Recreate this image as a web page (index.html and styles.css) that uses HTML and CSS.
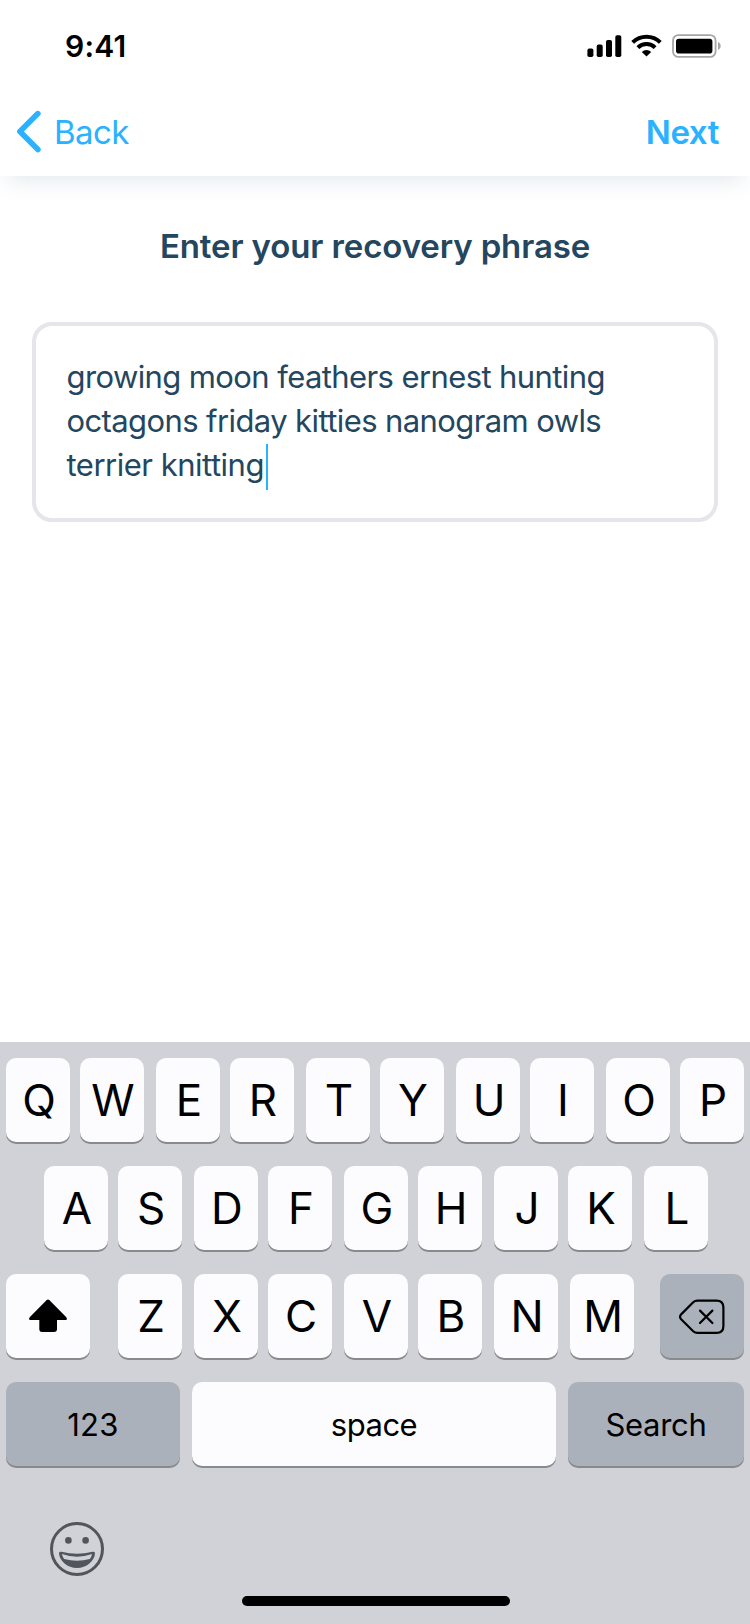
FILE: index.html
```html
<!DOCTYPE html>
<html lang="en">
<head>
<meta charset="utf-8">
<title>Recovery phrase</title>
<link rel="stylesheet" href="styles.css">
</head>
<body>
<div class="screen">
  <header class="header">
    <div class="status">
      <span class="time">9:41</span>
      <div class="status-icons">
        <svg class="signal" width="35" height="24" viewBox="0 0 35 24"><rect x=".4" y="14.6" width="6" height="8.4" rx="1.8"/><rect x="9.7" y="10.6" width="6" height="12.4" rx="1.8"/><rect x="19" y="6" width="6" height="17" rx="1.8"/><rect x="28.3" y="1.2" width="6" height="21.8" rx="1.8"/></svg>
        <svg class="wifi" width="31" height="24" viewBox="0 0 31 24"><g fill="none" stroke="#000" stroke-width="4"><path d="M1.7 8.4A19.6 19.6 0 0 1 29.3 8.4"/><path d="M6.9 13.6A12.3 12.3 0 0 1 24.1 13.6"/></g><path d="M15.5 22.6l-4.7-4.7a6.8 6.8 0 0 1 9.4 0z"/></svg>
        <svg class="battery" width="50" height="24" viewBox="0 0 50 24"><rect x="1" y="1.1" width="42.6" height="21.8" rx="5.4" fill="none" stroke="#a6a6a6" stroke-width="1.8"/><rect x="4" y="4.7" width="36.4" height="14.8" rx="2.8"/><path d="M46 8c1.8.8 2.7 2.2 2.7 4s-.9 3.200-2.700 4z" fill="#a6a6a6"/></svg>
      </div>
    </div>
    <nav class="nav">
      <a class="back"><svg width="26" height="44" viewBox="0 0 26 44"><path d="M21.900 3.600L3.900 21.500l18 18" fill="none" stroke="#2ab1ff" stroke-width="5.600" stroke-linecap="round" stroke-linejoin="round"/></svg><span>Back</span></a>
      <a class="next">Next</a>
    </nav>
  </header>
  <main class="content">
    <h1 class="title">Enter your recovery phrase</h1>
    <div class="phrase"><div class="line line-a">growing moon feathers ernest hunting</div><div class="line line-b">octagons friday kitties nanogram owls</div><div class="line line-c">terrier knitting<span class="caret"></span></div></div>
  </main>
  <section class="keyboard">
    <div class="row"><span class="key">Q</span><span class="key">W</span><span class="key">E</span><span class="key">R</span><span class="key">T</span><span class="key">Y</span><span class="key">U</span><span class="key">I</span><span class="key">O</span><span class="key">P</span></div>
    <div class="row row-mid"><span class="key">A</span><span class="key">S</span><span class="key">D</span><span class="key">F</span><span class="key">G</span><span class="key">H</span><span class="key">J</span><span class="key">K</span><span class="key">L</span></div>
    <div class="row row-low">
      <span class="key shift"><svg width="40" height="34" viewBox="0 0 40 34"><path d="M18.700 1.100Q20 0 21.300 1.100L38.300 18.200Q40 20.800 37.500 21H29V30Q29 33 26 33H14Q11.300 33 11.300 30V21H2.500Q0 20.800 1.700 18.200Z"/></svg></span>
      <div class="letters"><span class="key">Z</span><span class="key">X</span><span class="key">C</span><span class="key">V</span><span class="key">B</span><span class="key">N</span><span class="key">M</span></div>
      <span class="key delete"><svg width="46" height="36" viewBox="0 0 46 36"><g fill="none" stroke="#000" stroke-width="2.200" stroke-linecap="round" stroke-linejoin="round"><path d="M18.500 1.600H37.500Q44.400 1.600 44.400 8.500V27Q44.400 33.900 37.500 33.900H18.500Q16 33.900 14.200 32.200L1.900 20Q.2 17.800 1.900 15.600L14.200 3.300Q16 1.600 18.500 1.600Z"/><path d="M21 11.600L33.400 24M33.400 11.600L21 24"/></g></svg></span>
    </div>
    <div class="row row-fn"><span class="key fn numbers">123</span><span class="key fn space">space</span><span class="key fn search">Search</span></div>
    <svg class="emoji" width="54" height="54" viewBox="0 0 54 54"><circle cx="27" cy="27" r="25.500" fill="none" stroke="#50565b" stroke-width="3"/><g fill="#50565b"><circle cx="18.400" cy="18.400" r="3.300"/><circle cx="35.600" cy="18.400" r="3.300"/><path fill-rule="evenodd" d="M9 31.200Q9.200 29.400 11.500 29.800Q27 33.900 42.500 29.800Q44.900 29.400 45 31.200C44.600 39 36.500 46 27 46S9.400 39 9 31.200ZM11.900 32Q12.400 34.600 14.200 36.900Q27 40.500 39.800 36.900Q41.600 34.600 42.100 32Q27 37.300 11.900 32Z"/></g></svg>
    <div class="home"></div>
  </section>
</div>
</body>
</html>
```
FILE: styles.css
```css
* { box-sizing: border-box; }

body {
  margin: 0;
  background: #fff;
  font-family: Inter, "Liberation Sans", sans-serif;
}

svg { display: block; flex: none; }

.screen {
  display: flex;
  flex-direction: column;
  width: 750px;
  height: 1624px;
  overflow: hidden;
}

.header {
  height: 176px;
  background: #fff;
  box-shadow: 0 14px 20px -8px rgba(26, 76, 104, .11);
}

.status {
  display: flex;
  align-items: center;
  justify-content: space-between;
  height: 88px;
  padding: 4px 28px 0 65px;
}

.time { font-size: 30px; font-weight: 600; line-height: 40px; letter-spacing: .2px; }
.status-icons { display: flex; }
.wifi { margin-left: 9px; }
.battery { margin-left: 10px; }

.nav {
  display: flex;
  align-items: center;
  justify-content: space-between;
  height: 88px;
  padding: 0 31px 0 16px;
  color: #2ab1ff;
  font-size: 33px;
  line-height: 40px;
}

.back { display: flex; align-items: center; gap: 12px; letter-spacing: -.6px; }
.next { font-weight: 600; letter-spacing: -.4px; }

.content { flex: 1; padding: 50px 32px 0; color: #24465f; }

.title {
  margin: 0 0 56px;
  font-size: 33px;
  font-weight: 600;
  line-height: 40px;
  letter-spacing: -.12px;
  text-align: center;
}

.phrase {
  height: 200px;
  padding: 29px 30px 0;
  border: 4px solid #e5e5ea;
  border-radius: 20px;
  font-size: 31px;
  line-height: 44px;
  letter-spacing: -.6px;
  white-space: nowrap;
}

.line { display: flex; height: 44px; padding-left: .5px; }
.line-c { letter-spacing: -.5px; }
.caret { width: 2px; height: 46px; margin: 1px 0 0 2.5px; background: #2ab1ff; }

.keyboard {
  display: flex;
  flex-direction: column;
  gap: 24px;
  height: 582px;
  padding: 16px 6px 0;
  background: #d1d2d7;
}

.row { display: flex; }
.row-mid { padding-left: 38px; }
.row-low { gap: 28px; }
.letters { display: flex; width: 514px; }

.key {
  display: flex;
  align-items: center;
  justify-content: center;
  flex: none;
  width: 64px;
  height: 84px;
  margin-right: 12px;
  padding-left: 2px;
  border-radius: 10px;
  background: #fcfcfe;
  box-shadow: 0 2px 0 #898a8d;
  font-size: 44px;
  line-height: 52px;
  color: #000;
}

.key:nth-child(odd) { margin-right: 10px; }
.letters .key:nth-child(odd) { margin-right: 12px; }
.letters .key:nth-child(2),
.letters .key:nth-child(4) { margin-right: 10px; }
.row .key:last-child { margin-right: 0; }

.row-low .shift, .row-low .delete { width: 84px; margin: 0; padding: 0 0 1px; }
.row-low .delete { padding: 1px 0 0; }
.delete, .numbers, .search { background: #abb1bb; }

.row-fn { justify-content: space-between; }
.row-fn .fn { margin: 0; padding: 1px 0 0; font-size: 31px; letter-spacing: -.5px; }
.row-fn .numbers { width: 174px; letter-spacing: .3px; }
.row-fn .space { width: 364px; }
.row-fn .search { width: 176px; letter-spacing: -.3px; }

.emoji { margin: 32px 0 0 44px; }
.home { width: 268px; height: 10px; margin: -4px 0 0 236px; border-radius: 5px; background: #000; }
```
